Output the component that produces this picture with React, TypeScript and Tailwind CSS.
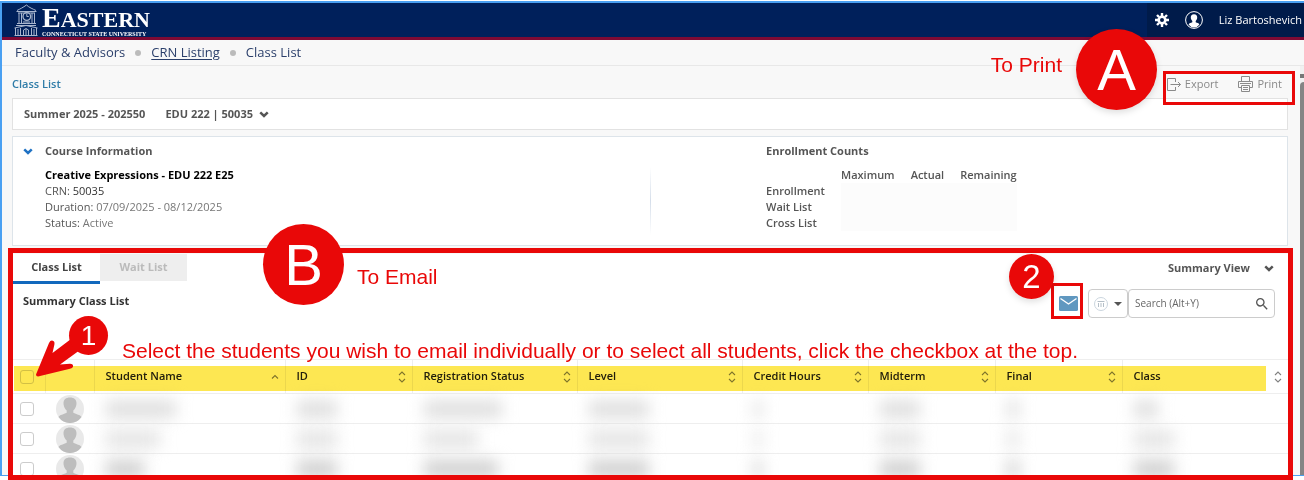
import type { ReactNode } from "react";
import { MdSearch } from "react-icons/md";

const COLUMNS = [
  { label: "Student Name", width: "w-[191px]", sort: "asc", blurs: ["w-[70px]", "w-[54px]", "w-[38px]"] },
  { label: "ID", width: "w-[127px]", sort: "both", blurs: ["w-10", "w-10", "w-10"] },
  { label: "Registration Status", width: "w-[165px]", sort: "both", blurs: ["w-[78px]", "w-[54px]", "w-[74px]"] },
  { label: "Level", width: "w-[165px]", sort: "both", blurs: ["w-[60px]", "w-[60px]", "w-[60px]"] },
  { label: "Credit Hours", width: "w-[126px]", sort: "both", blurs: ["w-2", "w-2", "w-2"] },
  { label: "Midterm", width: "w-[127px]", sort: "both", blurs: ["w-10", "w-10", "w-10"] },
  { label: "Final", width: "w-[127px]", sort: "both", blurs: ["w-3", "w-3", "w-3"] },
  { label: "Class", width: "", sort: "both", blurs: ["w-6", "w-10", "w-10"] },
];

// how dark the hidden values look, row by row
const ROW_SHADES = ["bg-[#dcdcdc]", "bg-[#e2e2e2]", "bg-[#cbcbcb]"];

function Chevron() {
  return (
    <svg viewBox="0 0 12 8" className="h-[7px] w-2.5" fill="none" stroke="currentColor" strokeWidth="3" aria-hidden="true">
      <path d="M1.5 1.5 6 5.8l4.5-4.3" />
    </svg>
  );
}

function SortIcon({ kind }: { kind: string }) {
  return (
    <svg viewBox="0 0 8 12" className="h-3 w-2 shrink-0 text-[#808080]" fill="none" stroke="currentColor" strokeWidth="1.1" aria-hidden="true">
      {kind === "asc" ? <path d="M1 7.5 4 4.500l3 3" /> : <path d="M1 4l3-3 3 3M1 8l3 3 3-3" />}
    </svg>
  );
}

function Tower() {
  return (
    <svg viewBox="0 0 24 32" className="h-8 w-6 shrink-0" fill="none" stroke="#a9b6cf" strokeWidth="1" aria-hidden="true">
      <path d="M3 6.500C6 5 9 3.500 12.500 1 15 3.500 19 5 22 6.500M2.500 7.500h20M4 9h17M5 9v10M7.500 9v10M18 9v10M20.500 9v10M3 19.500h19M2 21.500h20" />
      <circle cx="12.800" cy="12.500" r="3.800" strokeWidth="1.300" />
      <path d="M12.800 10v2.500h2M9 18h7" />
      <path d="M.5 24 12 21.500 23.500 24M1.500 24v7M4 25v6M6.500 24v7M9.500 31v-5q2.500-3 5 0v5M12 25v6M17.500 24v7M20 25v6M22.500 24v7M.5 31.500h23" />
    </svg>
  );
}

function Avatar() {
  return (
    <svg viewBox="0 0 28 28" className="block size-7" aria-hidden="true">
      <circle cx="14" cy="14" r="14" fill="#e9e9e9" />
      <path d="M2.500 22c1.500-2.500 5-2.300 8.200-4.200v-2.300C8.800 14 8 11.800 7.600 9.500 7 5 9.500 2.500 14 2.500s7 2.500 6.400 7c-.4 2.300-1.200 4.500-3.100 6v2.300c3.200 1.900 6.700 1.700 8.200 4.200A14 14 0 0 1 2.500 22z" fill="#bdbdbd" />
    </svg>
  );
}

function Badge({ className, children }: { className: string; children: ReactNode }) {
  return (
    <span className={`absolute flex items-center justify-center rounded-full bg-[#e90808] text-white ${className}`}>{children}</span>
  );
}

function Header() {
  return (
    <header className="flex h-[37px] shrink-0 items-stretch justify-between border-b-3 border-[#7d0a34] bg-[#00205b]">
      <a href="#home" className="flex items-center gap-1 pl-3 text-white" aria-label="Eastern Connecticut State University">
        <Tower />
        <span className="flex flex-col pt-1 font-['Liberation_Serif',serif] font-bold whitespace-nowrap">
          <span className="text-[22px] leading-[22px] first-letter:text-[28px]">EASTERN</span>
          <span className="text-[6px] leading-[7px]">CONNECTICUT STATE UNIVERSITY</span>
        </span>
      </a>
      <div className="flex items-center bg-[#001b4a] pr-0.5 pl-2 text-[11px] text-white">
        <button type="button" aria-label="Settings">
          <svg viewBox="0 0 14 14" className="size-3.5" fill="none" stroke="white" aria-hidden="true">
            <circle cx="7" cy="7" r="3.300" strokeWidth="2.600" />
            <path d="M7 0v3M7 11v3M0 7h3M11 7h3M2 2l2 2M10 10l2 2M12 2l-2 2M4 10l-2 2" strokeWidth="2.400" />
          </svg>
        </button>
        <button type="button" className="ml-4 flex items-center gap-4">
          <svg viewBox="0 0 18 18" className="size-[18px]" aria-hidden="true">
            <circle cx="9" cy="9" r="8.400" fill="none" stroke="white" strokeWidth="1" />
            <path d="M9 3.200c2.300 0 3.400 1.500 3.200 3.600-.1 1.400-.7 2.500-1.500 3.200v1.200c1.500.7 3 .8 3.700 2.200A7.500 7.500 0 0 1 9 16.600a7.500 7.500 0 0 1-5.400-3.200c.7-1.400 2.200-1.500 3.700-2.200V10c-.8-.7-1.400-1.800-1.500-3.200C5.600 4.700 6.700 3.200 9 3.200z" fill="white" />
          </svg>
          Liz Bartoshevich
        </button>
      </div>
    </header>
  );
}

function Breadcrumb() {
  return (
    <nav aria-label="Breadcrumb" className="flex h-[26px] shrink-0 items-center gap-2.5 border-b border-[#e8e8e8] bg-[#f8f8f8] pl-[13px] text-[13px] text-[#2b3f6b]">
      <span>Faculty &amp; Advisors</span>
      <i className="size-1.5 rounded-full bg-[#bbb]" />
      <a href="#crn" className="underline underline-offset-2">CRN Listing</a>
      <i className="size-1.5 rounded-full bg-[#bbb]" />
      <span>Class List</span>
    </nav>
  );
}

function CourseInformation() {
  return (
    <section className="mt-1.5 flex h-[110px] border border-[#dde4ea] bg-white pt-1.5 leading-4">
      <div className="flex w-1/2 gap-3 pl-2.5">
        <button type="button" aria-label="Collapse" className="h-4 text-[#1f72c4]"><Chevron /></button>
        <div>
          <h2 className="mb-2 font-bold text-[#555]">Course Information</h2>
          <p className="font-bold text-black">Creative Expressions - EDU 222 E25</p>
          <p>CRN: <span className="text-[#333]">50035</span></p>
          <p><span className="font-medium">Duration:</span> <span className="text-[#777]">07/09/2025 - 08/12/2025</span></p>
          <p><span className="font-medium">Status:</span> <span className="text-[#777]">Active</span></p>
        </div>
      </div>
      <div className="mt-6 h-[68px] w-px bg-linear-to-b from-white via-[#d5deea] to-white" />
      <div className="flex-1 pl-[115px]">
        <h2 className="mb-2 font-bold text-[#555]">Enrollment Counts</h2>
        <table className="text-left">
          <thead>
            <tr>
              <td className="w-[75px]" />
              <th className="pr-4 font-semibold">Maximum</th>
              <th className="pr-4 font-semibold">Actual</th>
              <th className="font-semibold">Remaining</th>
            </tr>
          </thead>
          <tbody>
            {["Enrollment", "Wait List", "Cross List"].map((label) => (
              <tr key={label}>
                <th className="font-semibold">{label}</th>
                <td colSpan={3} className="bg-[#fcfcfc]" />
              </tr>
            ))}
          </tbody>
        </table>
      </div>
    </section>
  );
}

function StudentTable() {
  return (
    <div className="relative">
      <table className="w-full table-fixed text-left">
        <thead>
          <tr className="h-[34px] border-y border-[#eee]">
            <th className="w-8"><input type="checkbox" aria-label="Select all students" className="ml-[7px] block size-3.5 appearance-none rounded-[3px] border border-[#d4d4d4] bg-white" /></th>
            <th className="w-[49px] border-l border-[#eee]" aria-label="Photo" />
            {COLUMNS.map((c) => (
              <th key={c.label} className={`border-l border-[#eee] pr-1.5 pl-[11px] font-semibold text-[#222] ${c.width}`}>
                <div className="flex items-center justify-between">{c.label}<SortIcon kind={c.sort} /></div>
              </th>
            ))}
          </tr>
        </thead>
        <tbody>
          {ROW_SHADES.map((shade, row) => (
            <tr key={row} className="h-[30px] border-b border-[#eee]">
              <td><input type="checkbox" aria-label={`Select student ${row + 1}`} className="ml-[7px] block size-3.5 appearance-none rounded-[3px] border border-[#ccc] bg-white" /></td>
              <td className="pl-[11px]"><Avatar /></td>
              {COLUMNS.map((c) => (
                <td key={c.label} className="pl-3"><div className={`h-4 blur-[8px] ${shade} ${c.blurs[row]}`} /></td>
              ))}
            </tr>
          ))}
        </tbody>
      </table>
      {/* highlighter over the column titles */}
      <div className="pointer-events-none absolute top-[7px] right-[22px] left-px h-[25px] bg-[#fde752] mix-blend-multiply" />
    </div>
  );
}

function ClassList() {
  return (
    <section className="mt-2 ml-px bg-white">
      <div className="flex items-start justify-between">
        <div role="tablist" className="flex items-start font-bold">
          <button type="button" role="tab" aria-selected="true" className="h-[30px] w-[87px] border-b-3 border-[#1168bd] text-[#444]">Class List</button>
          <button type="button" role="tab" aria-selected="false" className="h-[27px] w-[87px] bg-[#eee] text-[#bbb]">Wait List</button>
        </div>
        <button type="button" className="flex h-7 items-center gap-3.5 pr-[14px] font-bold text-[#555]">
          Summary View <Chevron />
        </button>
      </div>
      <div className="flex h-[75px] items-start justify-between pt-[5px] pr-[13px] pl-2.5">
        <h2 className="pt-1 leading-4 font-bold text-[#333]">Summary Class List</h2>
        <div className="flex items-center">
          <button type="button" aria-label="Email selected students" className="mr-2.5">
            <svg viewBox="0 0 19 15" className="h-[15px] w-[19px]" aria-hidden="true">
              <rect width="19" height="15" rx="1.500" fill="#6098c0" />
              <path d="M1.500 2.500 9.500 8l8-5.500" fill="none" stroke="white" strokeWidth="1.400" />
            </svg>
          </button>
          <button type="button" aria-label="Columns" className="flex h-[29px] w-10 items-center justify-center gap-1.5 rounded-sm border border-[#ccc]">
            <svg viewBox="0 0 14 14" className="size-3.5" fill="none" stroke="#b4bfc8" strokeWidth="1" aria-hidden="true">
              <circle cx="7" cy="7" r="6.500" stroke="#cbd5de" />
              <path d="M3.500 4.500h7M4.500 6v4M7 6v4M9.500 6v4" />
            </svg>
            <i className="border-x-4 border-t-4 border-x-transparent border-t-[#555]" />
          </button>
          <label className="flex h-[29px] w-[147px] items-center rounded-sm border border-[#ccc] pr-1 pl-1.5">
            <input type="search" aria-label="Search" placeholder="Search (Alt+Y)" className="w-full min-w-0 text-[10px] font-medium outline-none placeholder:text-[#666]" />
            <MdSearch className="size-4 shrink-0 text-[#555]" />
          </label>
        </div>
      </div>
      <StudentTable />
    </section>
  );
}

function Annotations() {
  return (
    <div className="pointer-events-none absolute inset-0 font-['Liberation_Sans',sans-serif] text-[21px] leading-6 whitespace-nowrap text-[#e90808]">
      <div className="absolute top-[248px] right-[11px] bottom-0 left-2 border-5 border-[#e90808]" />
      <div className="absolute top-[71px] right-[9px] h-[34px] w-[132px] border-3 border-[#e90808]" />
      <div className="absolute top-[283px] right-[221px] h-9 w-8 border-3 border-[#e90808]" />
      <p className="absolute top-[53px] right-[242px]">To Print</p>
      <p className="absolute top-[265px] left-[357px]">To Email</p>
      <p className="absolute top-[339px] left-[122px]">Select the students you wish to email individually or to select all students, click the checkbox at the top.</p>
      <svg viewBox="0 0 60 50" className="absolute top-[335px] left-[34px] h-[50px] w-[60px]" fill="#e90808" aria-hidden="true">
        <path d="M2 39.500 15 8q2-4 5-1.500.8 1 .4 3L18.500 18 37 4l9 11-20 14.500 10-.8q3.500 0 3 3-.5 1.500-3 2L4 41.500q-2 0-2-2z" />
      </svg>
      <Badge className="top-[29px] right-[147px] size-[81px] text-[58px] drop-shadow-md">A</Badge>
      <Badge className="top-[224px] left-[263px] size-[81px] text-[58px]">B</Badge>
      <Badge className="top-[316px] left-[69px] size-[39px] text-[28px]">1</Badge>
      <Badge className="top-[254px] right-[250px] size-[45px] text-[33px] drop-shadow-md">2</Badge>
    </div>
  );
}

export default function App() {
  return (
    <div className="relative flex h-screen flex-col overflow-hidden bg-white pt-px pb-1 font-['Open_Sans',sans-serif] text-[11px] text-[#555]">
      <div className="flex min-h-0 flex-1 flex-col border-t-2 border-b border-l-2 border-[#4aa0f2]">
        <Header />
        <Breadcrumb />
        <div className="flex min-h-0 flex-1 bg-[#f8f8f8]">
          <main className="min-w-0 flex-1 overflow-hidden pr-3 pl-2.5">
            <div className="flex h-8 items-center justify-between pt-1">
              <h1 className="font-semibold text-[#2f7ca8]">Class List</h1>
              <div className="flex items-center gap-5 pr-1.5 text-[#8a8a8a]">
                <button type="button" className="flex items-center gap-1">
                  <svg viewBox="0 0 15 13" className="h-[13px] w-[15px]" fill="none" stroke="currentColor" aria-hidden="true">
                    <path d="M9.500 4V.5h-8v12h8V9M4.500 6.500h10M12 4l2.500 2.500L12 9" />
                  </svg>
                  Export
                </button>
                <button type="button" className="flex items-center gap-1">
                  <svg viewBox="0 0 15 16" className="h-4 w-[15px]" fill="none" stroke="currentColor" aria-hidden="true">
                    <path d="M3.500 5V.5h8V5M3.500 11.500h-3v-6h14v6h-3M3.500 9.500h8v6h-8zM5 11.500h5M5 13.500h5M2 7.500h11" />
                  </svg>
                  Print
                </button>
              </div>
            </div>
            <div className="flex h-8 items-center gap-5 border border-[#e2e2e2] bg-white pl-[11px] font-bold">
              <span>Summer 2025 - 202550</span>
              <button type="button" className="flex items-center gap-1.5">EDU 222 | 50035 <Chevron /></button>
            </div>
            <CourseInformation />
            <ClassList />
          </main>
          <div className="flex w-1 flex-col bg-[#f1f1f1]">
            <i className="mt-2 mb-1 h-1 w-1 bg-[#777]" />
            <i className="flex-1 rounded-tl bg-[#858585]" />
          </div>
        </div>
      </div>
      <Annotations />
    </div>
  );
}
